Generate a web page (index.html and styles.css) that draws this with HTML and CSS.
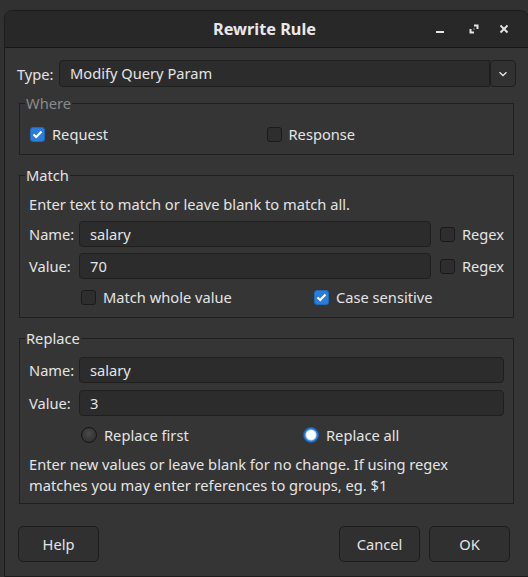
FILE: index.html
```html
<!DOCTYPE html>
<html>
<head>
<meta charset="utf-8">
<link rel="stylesheet" href="styles.css">
</head>
<body>
<div class="window">
  <div class="titlebar">
    <div class="tb-spacer"></div>
    <div class="title">Rewrite Rule</div>
    <div class="controls">
      <span class="ctl"><svg width="10" height="10" viewBox="0 0 10 10"><rect x="1" y="7" width="8" height="2" fill="#e6e6e6"/></svg></span>
      <span class="ctl"><svg width="10" height="10" viewBox="0 0 10 10"><path d="M5 1.5H8.5V5M1.5 5V8.5H5" fill="none" stroke="#e6e6e6" stroke-width="2"/><rect x="4.5" y="4.5" width="1" height="1" fill="#e6e6e6"/></svg></span>
      <span class="ctl"><svg width="10" height="10" viewBox="0 0 10 10"><path d="M1.5 1.5L8.5 8.5M8.5 1.5L1.5 8.5" stroke="#e6e6e6" stroke-width="1.8"/></svg></span>
    </div>
  </div>
  <div class="content">
    <div class="type-row">
      <span class="type-label">Type:</span>
      <div class="combo">Modify Query Param</div>
      <div class="combo-btn"><svg width="10" height="6" viewBox="0 0 10 6"><path d="M1.5 1.2L5 4.5L8.5 1.2" fill="none" stroke="#e6e6e6" stroke-width="1.3"/></svg></div>
    </div>

    <fieldset class="group where">
      <legend class="legend dim">Where</legend>
      <div class="where-row">
        <label class="opt"><span class="cb checked"><svg width="11" height="9" viewBox="0 0 11 9"><path d="M1.5 4.5L4.2 7L9.5 1.5" fill="none" stroke="#fff" stroke-width="2.2"/></svg></span>Request</label>
        <label class="opt"><span class="cb"></span>Response</label>
      </div>
    </fieldset>

    <fieldset class="group match">
      <legend class="legend">Match</legend>
      <div class="hint">Enter text to match or leave blank to match all.</div>
      <div class="form-grid three">
        <span class="flabel">Name:</span>
        <div class="field">salary</div>
        <label class="opt regex"><span class="cb"></span>Regex</label>
        <span class="flabel">Value:</span>
        <div class="field">70</div>
        <label class="opt regex"><span class="cb"></span>Regex</label>
      </div>
      <div class="opt-row">
        <label class="opt first-match"><span class="cb"></span>Match whole value</label>
        <label class="opt"><span class="cb checked"><svg width="11" height="9" viewBox="0 0 11 9"><path d="M1.5 4.5L4.2 7L9.5 1.5" fill="none" stroke="#fff" stroke-width="2.2"/></svg></span>Case sensitive</label>
      </div>
    </fieldset>

    <fieldset class="group replace">
      <legend class="legend">Replace</legend>
      <div class="form-grid two">
        <span class="flabel">Name:</span>
        <div class="field">salary</div>
        <span class="flabel">Value:</span>
        <div class="field">3</div>
      </div>
      <div class="opt-row radios">
        <label class="opt first-replace"><span class="radio"></span>Replace first</label>
        <label class="opt"><span class="radio on"></span>Replace all</label>
      </div>
      <div class="hint2">Enter new values or leave blank for no change. If using regex<br>matches you may enter references to groups, eg. $1</div>
    </fieldset>

    <div class="buttons">
      <button class="btn">Help</button>
      <div class="btn-spacer"></div>
      <button class="btn">Cancel</button>
      <button class="btn">OK</button>
    </div>
  </div>
</div>
</body>
</html>
```

FILE: styles.css
```css
* { box-sizing: border-box; }
html, body {
  margin: 0;
  padding: 0;
  height: 577px;
  overflow: hidden;
  background: #313131;
}
body {
  font-family: "Noto Sans", "Open Sans", sans-serif;
  font-size: 14.67px;
  color: #e4e4e4;
  padding: 10px 0 0 4px;
}
.window {
  width: 525px;
  height: 567px;
  background: #353535;
  border: 1px solid #1c1c1c;
  border-radius: 8px 8px 0 0;
  overflow: hidden;
}
.titlebar {
  height: 37px;
  background: #282828;
  border-bottom: 1px solid #161616;
  display: grid;
  grid-template-columns: 1fr auto 1fr;
  align-items: center;
}
.title {
  font-weight: bold;
  font-size: 16.3px;
  color: #e8e8e8;
  margin-left: -4px;
}
.controls {
  display: flex;
  justify-content: flex-end;
  align-items: center;
  padding-right: 12px;
  gap: 6px;
}
.ctl {
  width: 24px;
  height: 24px;
  display: flex;
  align-items: center;
  justify-content: center;
}
.ctl:first-child { margin-right: 4px; }
.content {
  padding: 12px 12px 0 12px;
}
.type-row {
  display: flex;
  align-items: center;
  height: 27px;
}
.type-label {
  width: 42px;
}
.combo {
  flex: 1;
  height: 27px;
  background: #2c2c2c;
  border: 1px solid #1f1f1f;
  border-radius: 4px 0 0 4px;
  padding-left: 10px;
  line-height: 25px;
}
.combo-btn {
  width: 26px;
  height: 27px;
  border: 1px solid #1f1f1f;
  border-radius: 4px;
  background: #313131;
  display: flex;
  align-items: center;
  justify-content: center;
}
.group {
  margin: 8px 2px 0 2px;
  border: 1px solid #1f1f1f;
  padding: 0 9px;
  min-inline-size: 0;
}
.legend {
  padding: 0 1px;
  margin-left: -4px;
  line-height: 16px;
}
.legend.dim { color: #8a8a8a; }
.where { padding-top: 13px; padding-bottom: 10px; }
.match { margin-top: 12px; padding-top: 11px; padding-bottom: 10px; }
.replace { margin-top: 12px; padding-top: 11px; padding-bottom: 7px; }
.where-row {
  display: grid;
  grid-template-columns: 1fr 1fr;
  height: 20px;
  align-items: center;
}
.opt {
  display: flex;
  align-items: center;
  gap: 7px;
  height: 20px;
  white-space: nowrap;
}
.where-row .opt:first-child { margin-left: 1px; }
.cb {
  width: 15px;
  height: 15px;
  border: 1px solid #1a1a1a;
  border-radius: 3px;
  background: #2e2e2e;
  display: inline-flex;
  align-items: center;
  justify-content: center;
  flex: none;
}
.cb.checked {
  background: #2b7ddc;
  border-color: #2268b8;
}
.hint {
  height: 21px;
  line-height: 21px;
}
.form-grid {
  display: grid;
  column-gap: 6px;
  row-gap: 6px;
  align-items: center;
  margin-top: 6px;
}
.form-grid.three { grid-template-columns: 44px 1fr auto; }
.form-grid.two { grid-template-columns: 44px 1fr; row-gap: 7px; margin-top: 0; }
.flabel { line-height: 20px; }
.field {
  height: 26px;
  background: #2c2c2c;
  border: 1px solid #1f1f1f;
  border-radius: 4px;
  padding-left: 10px;
  line-height: 24px;
}
.regex { margin-left: 3px; gap: 7px; }
.opt-row {
  display: flex;
  margin-top: 8px;
  padding-left: 52px;
}
.first-match { width: 233px; }
.radios { margin-top: 9px; }
.first-replace { width: 222px; }
.radio {
  width: 16px;
  height: 16px;
  border-radius: 50%;
  border: 1px solid #161616;
  background: radial-gradient(circle at 50% 40%, #4a4a4a, #333 70%);
  flex: none;
}
.radio.on {
  border: 1px solid #1a5cb0;
  background: radial-gradient(circle, #ffffff 0 4px, #cfe0f8 5px, #2b7ddc 6px);
}
.hint2 {
  margin-top: 9px;
  line-height: 21px;
}
.buttons {
  display: flex;
  margin: 22px 6px 0 1px;
  gap: 9px;
}
.btn-spacer { flex: 1; }
.btn {
  width: 81px;
  height: 36px;
  background: #303030;
  border: 1px solid #1c1c1c;
  border-radius: 5px;
  color: #e4e4e4;
  font-family: "Noto Sans", "Open Sans", sans-serif;
  font-size: 14.67px;
  padding: 0;
}
```
